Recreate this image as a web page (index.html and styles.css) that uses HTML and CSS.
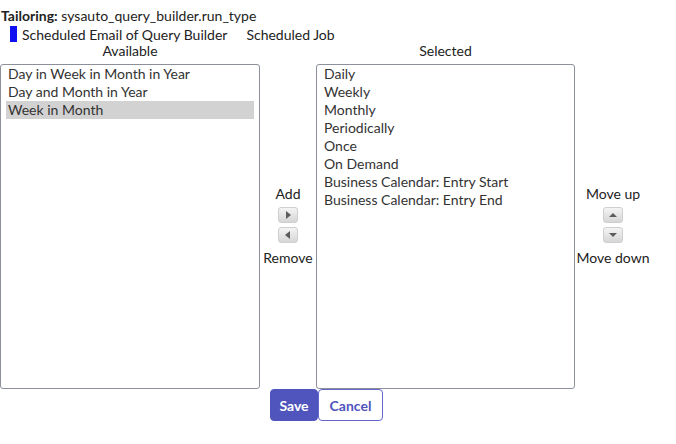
FILE: index.html
```html
<!DOCTYPE html>
<html>
<head>
<meta charset="utf-8">
<link rel="stylesheet" href="styles.css">
</head>
<body>
<div class="page">
  <div class="title"><span class="bold">Tailoring:</span> sysauto_query_builder.run_type</div>
  <div class="tabs">
    <span class="marker"></span>
    <span class="tab">Scheduled Email of Query Builder</span>
    <span class="tab">Scheduled Job</span>
  </div>
  <div class="grid">
    <div class="head">Available</div>
    <div></div>
    <div class="head">Selected</div>
    <div></div>
    <div class="list">
      <div class="opt">Day in Week in Month in Year</div>
      <div class="opt">Day and Month in Year</div>
      <div class="opt sel">Week in Month</div>
    </div>
    <div class="ctrl">
      <div class="lbl">Add</div>
      <div class="btns">
        <span class="ib"><svg width="8" height="10" viewBox="0 0 8 10"><path d="M2 1 L7 5 L2 9 Z" fill="#5c5c5c"/></svg></span>
        <span class="ib"><svg width="8" height="10" viewBox="0 0 8 10"><path d="M6 1 L1 5 L6 9 Z" fill="#5c5c5c"/></svg></span>
      </div>
      <div class="lbl">Remove</div>
    </div>
    <div class="list">
      <div class="opt">Daily</div>
      <div class="opt">Weekly</div>
      <div class="opt">Monthly</div>
      <div class="opt">Periodically</div>
      <div class="opt">Once</div>
      <div class="opt">On Demand</div>
      <div class="opt">Business Calendar: Entry Start</div>
      <div class="opt">Business Calendar: Entry End</div>
    </div>
    <div class="ctrl move">
      <div class="lbl">Move up</div>
      <div class="btns">
        <span class="ib"><svg width="10" height="8" viewBox="0 0 10 8"><path d="M1 6 L5 2 L9 6 Z" fill="#5c5c5c"/></svg></span>
        <span class="ib"><svg width="10" height="8" viewBox="0 0 10 8"><path d="M1 2 L5 6 L9 2 Z" fill="#5c5c5c"/></svg></span>
      </div>
      <div class="lbl">Move down</div>
    </div>
  </div>
  <div class="actions">
    <button class="btn primary">Save</button><button class="btn secondary">Cancel</button>
  </div>
</div>
</body>
</html>
```
FILE: styles.css
```css
html, body {
  margin: 0;
  padding: 0;
  background: #fff;
}
body {
  font-family: Lato, "Liberation Sans", sans-serif;
  font-size: 14px;
  color: #222;
}
.page {
  padding-top: 7px;
}
.title {
  line-height: 18px;
  padding-left: 1px;
}
.bold {
  font-weight: bold;
}
.tabs {
  display: flex;
  align-items: center;
  height: 18px;
  padding-left: 10px;
}
.marker {
  display: inline-block;
  width: 7px;
  height: 16px;
  background: #1010f0;
  margin-right: 5px;
}
.tab {
  margin-right: 19px;
}
.grid {
  display: grid;
  grid-template-columns: 260px 56px 259px 76px;
  grid-template-rows: 16px 325px;
  row-gap: 5px;
}
.head {
  text-align: center;
  line-height: 16px;
}
.list {
  border: 1px solid #8c909a;
  border-radius: 3px;
  padding: 0 5px;
  box-sizing: border-box;
  color: #333;
}
.opt {
  line-height: 18px;
  padding-left: 2px;
  white-space: nowrap;
}
.opt.sel {
  background: #d2d2d2;
}
.ctrl {
  display: flex;
  flex-direction: column;
  align-items: center;
  justify-content: center;
  padding-bottom: 2px;
}
.lbl {
  line-height: 18px;
  white-space: nowrap;
}
.btns {
  display: flex;
  flex-direction: column;
  gap: 4px;
  margin: 4px 0 6px;
}
.ib {
  width: 20px;
  height: 16px;
  box-sizing: border-box;
  border: 1px solid #cfcfcf;
  border-radius: 3px;
  background: linear-gradient(#f4f4f4, #d6d6d6);
  display: flex;
  align-items: center;
  justify-content: center;
}
.actions {
  padding-left: 270px;
  display: flex;
}
.btn {
  font-family: Lato, "Liberation Sans", sans-serif;
  font-weight: bold;
  font-size: 14px;
  height: 32px;
  border-radius: 4px;
  box-sizing: border-box;
  cursor: pointer;
}
.primary {
  width: 48px;
  background: #5054bd;
  color: #fff;
  border: 1px solid #5054bd;
}
.secondary {
  width: 65px;
  background: #fff;
  color: #5054bd;
  border: 1px solid #6367c9;
}
```
